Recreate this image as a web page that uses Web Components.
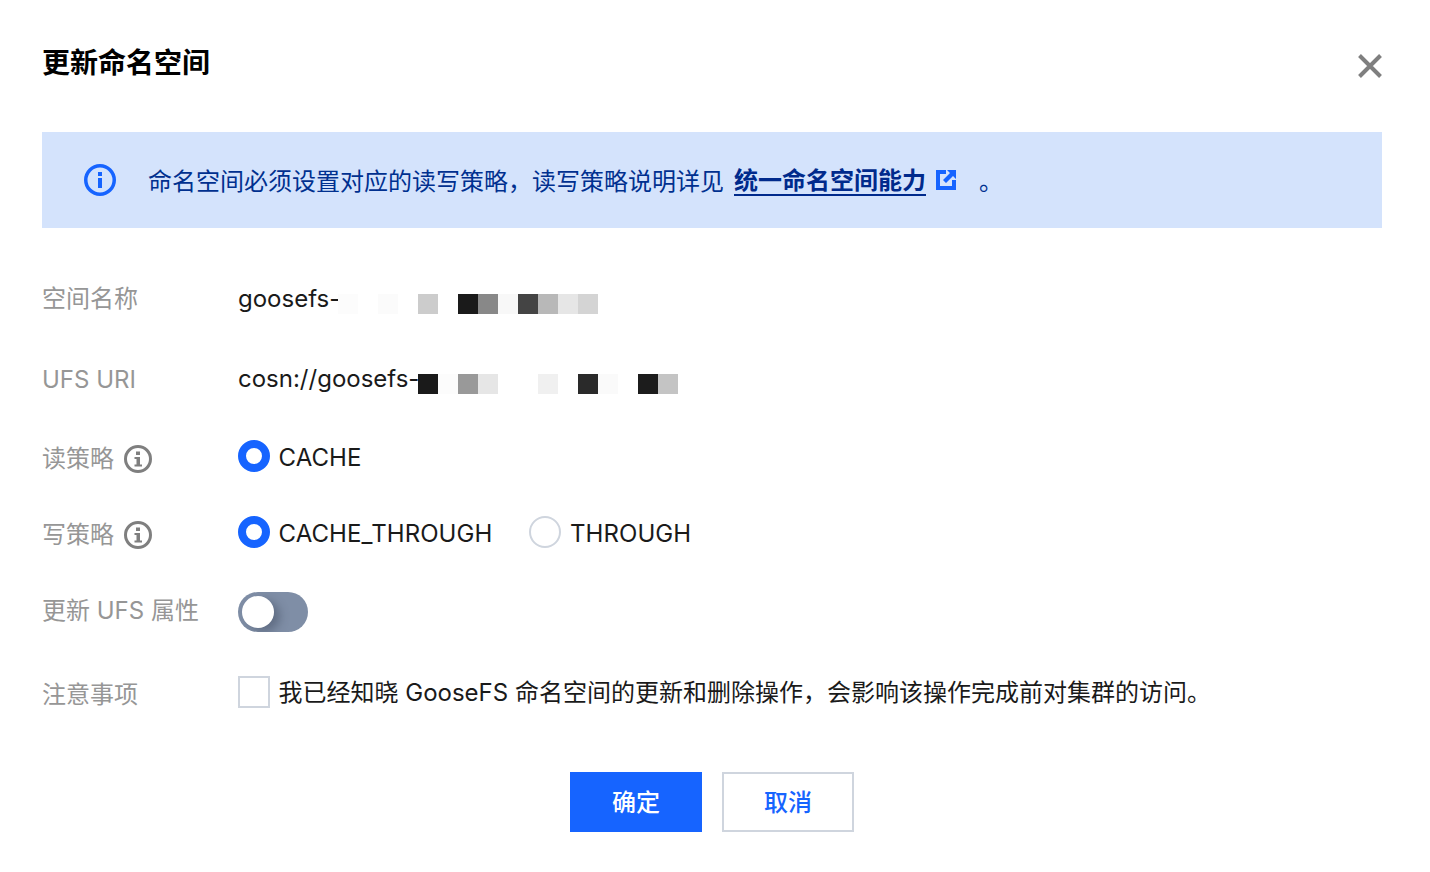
<!DOCTYPE html>
<html lang="zh">
<head>
<meta charset="utf-8">
<title>更新命名空间</title>
<style>
  html, body { margin: 0; background: #fff; }
  body { font-family: Inter, "Noto Sans CJK SC", sans-serif; font-size: 24px; color: #1a1a1a; }
</style>
</head>
<body>
<ns-dialog heading="更新命名空间">
  <ns-alert>命名空间必须设置对应的读写策略，读写策略说明详见<span slot="link">统一命名空间能力</span></ns-alert>

  <form-row label="空间名称" height="80" lift="4">
    <span>goosefs-</span>
    <mosaic-block offset="-2" cells="fcfcfc,fff,fbfbfb,fff,ccc,fff,1a1a1a,888,f8f8f8,444,b8b8b8,e6e6e6,d4d4d4"></mosaic-block>
  </form-row>
  <form-row label="UFS URI" height="80" lift="1">
    <span>cosn://goosefs-</span>
    <mosaic-block offset="-1" notch cells="1a1a1a,fcfcfc,999,e6e6e6,fff,fff,f0f0f0,fff,2a2a2a,fafafa,fff,1c1c1c,c4c4c4"></mosaic-block>
  </form-row>
  <form-row label="读策略" height="76" lift="2" hint>
    <ns-radio checked>CACHE</ns-radio>
  </form-row>
  <form-row label="写策略" height="76" lift="2" hint>
    <ns-radio checked>CACHE_THROUGH</ns-radio>
    <ns-radio>THROUGH</ns-radio>
  </form-row>
  <form-row label="更新 UFS 属性" height="80" lift="4">
    <ns-switch></ns-switch>
  </form-row>
  <form-row label="注意事项" height="84" lift="2">
    <ns-checkbox>我已经知晓 GooseFS 命名空间的更新和删除操作，会影响该操作完成前对集群的访问。</ns-checkbox>
  </form-row>

  <ns-button slot="footer" primary>确定</ns-button>
  <ns-button slot="footer">取消</ns-button>
</ns-dialog>

<script>
class NsDialog extends HTMLElement {
  constructor() {
    super();
    this.attachShadow({ mode: "open" });
  }
  connectedCallback() {
    this.shadowRoot.innerHTML = `
      <style>
        :host { display: block; box-sizing: border-box; width: 1430px; height: 872px; padding: 0 48px 0 42px; background: #fff; overflow: hidden; }
        header { display: flex; justify-content: space-between; height: 132px; }
        h2 { margin: 43px 0 0; font-size: 28px; line-height: 40px; font-weight: 700; color: #000; }
        svg { margin: 54px 0 0; display: block; }
        .form { margin-top: 31px; }
        footer { display: flex; justify-content: center; gap: 20px; margin-top: 37px; }
      </style>
      <header>
        <h2>${this.getAttribute("heading")}</h2>
        <svg width="24" height="24" viewBox="0 0 24 24"><path d="M1.5 1.5L22.5 22.5M22.5 1.5L1.5 22.5" stroke="#7f7f7f" stroke-width="4" fill="none"/></svg>
      </header>
      <div class="form"><slot></slot></div>
      <footer><slot name="footer"></slot></footer>`;
  }
}

class NsAlert extends HTMLElement {
  constructor() {
    super();
    this.attachShadow({ mode: "open" });
    this.shadowRoot.innerHTML = `
      <style>
        :host { display: flex; align-items: center; box-sizing: border-box; width: 1340px; height: 96px; padding: 0 42px; margin-top: -31px; margin-bottom: 31px; background: #d4e3fc; color: #00308f; }
        svg { flex: none; margin-right: 32px; }
        .txt { display: flex; align-items: center; white-space: nowrap; line-height: 36px; padding-top: 2px; }
        .main, .dot { padding-top: 2px; }
        .lnk { margin-left: 10px; font-weight: 700; color: #002a8c; border-bottom: 2px solid #002a8c; line-height: 30px; height: 28px; }
        .ext { flex: none; margin: -2px 0 0 10px; }
        .dot { margin-left: 23px; }
      </style>
      <svg width="32" height="32" viewBox="0 0 32 32"><circle cx="16" cy="16" r="14.25" fill="none" stroke="#1664ff" stroke-width="3.5"/><rect x="14" y="8" width="4" height="4" fill="#1664ff"/><rect x="14" y="14" width="4" height="10" fill="#1664ff"/></svg>
      <div class="txt"><span class="main"><slot></slot></span><span class="lnk"><slot name="link"></slot></span><svg class="ext" width="20" height="20" viewBox="0 0 20 20"><path d="M10 2H2V18H18V10" fill="none" stroke="#1664ff" stroke-width="4"/><path d="M11 0H20V9L17 6L10 13L7 10L14 3Z" fill="#1664ff"/></svg><span class="dot">。</span></div>`;
  }
}

class FormRow extends HTMLElement {
  constructor() {
    super();
    this.attachShadow({ mode: "open" });
  }
  connectedCallback() {
    const lift = Number(this.getAttribute("lift") || 0);
    const hint = this.hasAttribute("hint") ? `
      <svg width="28" height="28" viewBox="0 0 28 28"><circle cx="14" cy="14" r="12.5" fill="none" stroke="#7f7f7f" stroke-width="3"/><rect x="12" y="6.5" width="4" height="3.5" fill="#7f7f7f"/><path d="M10.5 12H16V19.5H18V21.5H10.5V19.5H12.5V14H10.5Z" fill="#7f7f7f"/></svg>` : "";
    this.shadowRoot.innerHTML = `
      <style>
        :host { display: grid; grid-template-columns: 196px 1fr; align-items: center; height: ${this.getAttribute("height")}px; }
        .label { display: flex; align-items: center; gap: 10px; color: #969696; white-space: nowrap; padding-top: 2px; }
        .label span { margin-bottom: ${lift * 2}px; }
        .label svg { flex: none; margin-top: 2px; }
        .ctl { display: flex; align-items: center; min-width: 0; margin-top: -2px; }
      </style>
      <div class="label"><span>${this.getAttribute("label")}</span>${hint}</div>
      <div class="ctl"><slot></slot></div>`;
  }
}

// pixelated cover over masked values, 20px cells
class MosaicBlock extends HTMLElement {
  constructor() {
    super();
    this.attachShadow({ mode: "open" });
  }
  connectedCallback() {
    const cells = this.getAttribute("cells").split(",")
      .map(c => `<i style="background:#${c}"></i>`).join("");
    this.shadowRoot.innerHTML = `
      <style>
        :host { display: flex; margin: 12px 0 0 ${this.getAttribute("offset") || 0}px; }
        i { display: block; width: 20px; height: 20px; }
        :host([notch]) i:first-child { border-bottom-left-radius: 9px; }
      </style>${cells}`;
  }
}

class NsRadio extends HTMLElement {
  constructor() {
    super();
    this.attachShadow({ mode: "open" });
    this.shadowRoot.innerHTML = `
      <style>
        :host { display: inline-flex; align-items: center; gap: 8.5px; margin-right: 37px; white-space: nowrap; letter-spacing: .08px; }
        .dot { box-sizing: border-box; width: 32px; height: 32px; border-radius: 50%; border: 2px solid #cfd5de; background: #fff; }
        :host([checked]) .dot { border: 8px solid #1664ff; }
        .txt { margin-top: 2px; }
      </style>
      <span class="dot"></span><span class="txt"><slot></slot></span>`;
  }
}

class NsSwitch extends HTMLElement {
  constructor() {
    super();
    this.attachShadow({ mode: "open" });
    this.shadowRoot.innerHTML = `
      <style>
        :host { display: block; position: relative; width: 70px; height: 40px; margin-top: 4px; border-radius: 20px; background: #7f8ea6; overflow: hidden; }
        .knob { position: absolute; left: 4px; top: 4px; width: 32px; height: 32px; border-radius: 50%; background: #fff; box-shadow: 6px 4px 10px rgba(40,50,70,.35); }
      </style>
      <span class="knob"></span>`;
  }
}

class NsCheckbox extends HTMLElement {
  constructor() {
    super();
    this.attachShadow({ mode: "open" });
    this.shadowRoot.innerHTML = `
      <style>
        :host { display: inline-flex; align-items: center; gap: 8.5px; white-space: nowrap; }
        .box { box-sizing: border-box; width: 32px; height: 32px; border: 2px solid #cfd5de; background: #fff; }
        .txt { line-height: 32px; margin-top: 2px; }
      </style>
      <span class="box"></span><span class="txt"><slot></slot></span>`;
  }
}

class NsButton extends HTMLElement {
  constructor() {
    super();
    this.attachShadow({ mode: "open" });
    this.shadowRoot.innerHTML = `
      <style>
        :host { display: flex; align-items: center; justify-content: center; box-sizing: border-box; width: 132px; height: 60px; padding-bottom: 4px; border: 2px solid #cfd5de; background: #fff; color: #1664ff; cursor: pointer; font-weight: 500; }
        :host([primary]) { border-color: #1664ff; background: #1664ff; color: #fff; }
      </style>
      <slot></slot>`;
  }
}

customElements.define("ns-dialog", NsDialog);
customElements.define("ns-alert", NsAlert);
customElements.define("form-row", FormRow);
customElements.define("mosaic-block", MosaicBlock);
customElements.define("ns-radio", NsRadio);
customElements.define("ns-switch", NsSwitch);
customElements.define("ns-checkbox", NsCheckbox);
customElements.define("ns-button", NsButton);
</script>
</body>
</html>
